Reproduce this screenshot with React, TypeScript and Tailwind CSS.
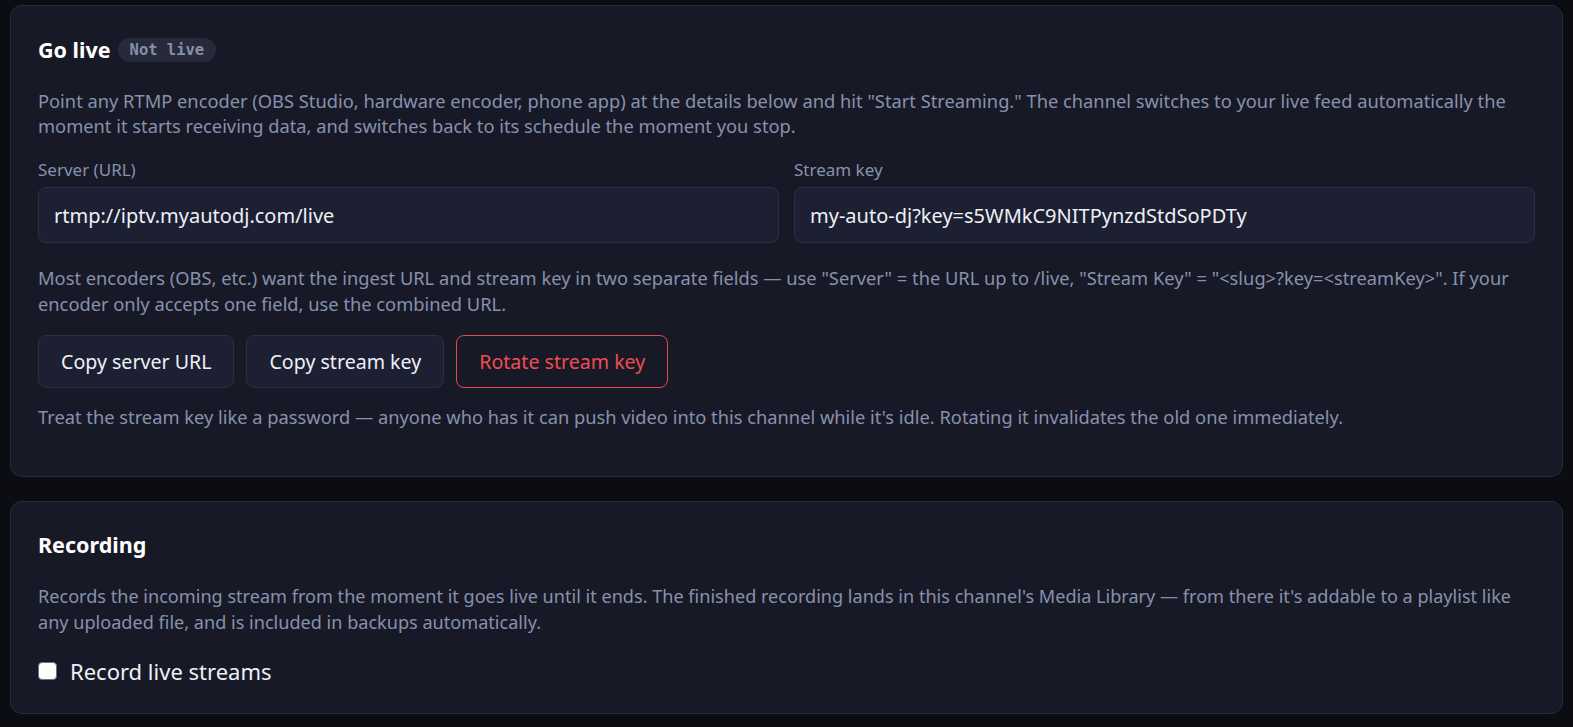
import { useState } from "react";

const font = { fontFamily: '"Noto Sans", "Open Sans", sans-serif' };

function SecondaryButton({ children }: { children: React.ReactNode }) {
  return (
    <button className="h-[53px] rounded-lg border border-[#2a2f45] bg-[#1c2032] px-[22px] text-[19.6px] text-[#eef0f6]">
      {children}
    </button>
  );
}

function Field({ label, value }: { label: string; value: string }) {
  return (
    <div className="flex flex-col">
      <label className="text-[17px] leading-[24px] text-[#8791ad]">{label}</label>
      <input
        readOnly
        value={value}
        className="mt-[5px] h-[56px] w-full rounded-lg border border-[#2a2f45] bg-[#1c2032] px-[15px] text-[20px] text-[#eef0f6] outline-none"
      />
    </div>
  );
}

export default function App() {
  const [record, setRecord] = useState(false);

  return (
    <div className="min-h-screen w-full bg-[#0c0d12] px-[10px] pt-[5px] pb-[15px]" style={font}>
      {/* Go live */}
      <section className="rounded-xl border border-[#262b3f] bg-[#171a26] px-[27px] pt-[30px] pb-[47px]">
        <div className="flex items-center gap-[7px]">
          <h2 className="text-[21.5px] font-bold leading-[28px] text-white">Go live</h2>
          <span
            className="rounded-full bg-[#262a3b] px-[12px] text-[15.5px] font-bold leading-[24px] text-[#878fa9]"
            style={{ fontFamily: '"DejaVu Sans Mono", monospace' }}
          >
            Not live
          </span>
        </div>

        <p className="mt-[24px] text-[18.3px] leading-[25px] text-[#8791ad]">
          Point any RTMP encoder (OBS Studio, hardware encoder, phone app) at the details below and hit "Start Streaming." The
          channel switches to your live feed automatically the moment it starts receiving data, and switches back to its schedule
          the moment you stop.
        </p>

        <div className="mt-[20px] grid grid-cols-2 gap-[15px]">
          <Field label="Server (URL)" value="rtmp://iptv.myautodj.com/live" />
          <Field label="Stream key" value="my-auto-dj?key=s5WMkC9NITPynzdStdSoPDTy" />
        </div>

        <p className="mt-[22px] text-[18.3px] leading-[26px] text-[#8791ad]">
          Most encoders (OBS, etc.) want the ingest URL and stream key in two separate fields — use "Server" = the URL up to
          /live, "Stream Key" = "&lt;slug&gt;?key=&lt;streamKey&gt;". If your encoder only accepts one field, use the combined URL.
        </p>

        <div className="mt-[18px] flex gap-[12px]">
          <SecondaryButton>Copy server URL</SecondaryButton>
          <SecondaryButton>Copy stream key</SecondaryButton>
          <button className="h-[53px] rounded-lg border border-[#e5484d] bg-transparent px-[22px] text-[19.6px] text-[#ef4c50]">
            Rotate stream key
          </button>
        </div>

        <p className="mt-[16px] text-[18.3px] leading-[25px] text-[#8791ad]">
          Treat the stream key like a password — anyone who has it can push video into this channel while it's idle. Rotating it
          invalidates the old one immediately.
        </p>
      </section>

      {/* Recording */}
      <section className="mt-[24px] rounded-xl border border-[#262b3f] bg-[#171a26] px-[27px] pt-[29px] pb-[28px]">
        <h2 className="text-[21.5px] font-bold leading-[28px] text-white">Recording</h2>
        <p className="mt-[24px] text-[18.1px] leading-[26px] text-[#8791ad]">
          Records the incoming stream from the moment it goes live until it ends. The finished recording lands in this channel's
          Media Library — from there it's addable to a playlist like any uploaded file, and is included in backups automatically.
        </p>
        <label className="mt-[22px] flex items-center gap-[13px]">
          <input
            type="checkbox"
            checked={record}
            onChange={(e) => setRecord(e.target.checked)}
            className="h-[18px] w-[19px] appearance-none rounded-[4px] border border-[#6b7080] bg-white"
          />
          <span className="text-[22px] leading-[28px] text-[#eef0f6]">Record live streams</span>
        </label>
      </section>
    </div>
  );
}
